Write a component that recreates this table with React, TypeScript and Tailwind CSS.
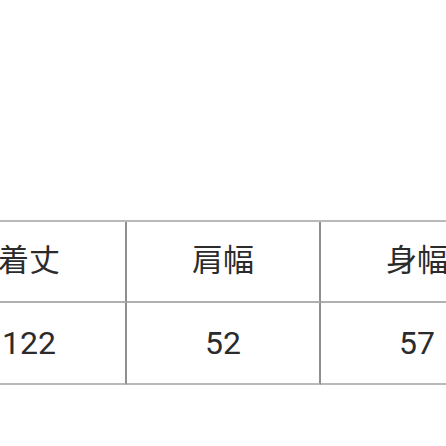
import React from 'react';

const headers = ['着丈', '肩幅', '身幅'];
const values = ['122', '52', '57'];

export default function App() {
  return (
    <div
      className="w-[446px] h-[446px] overflow-hidden bg-white text-[#2b2b2b]"
      style={{ fontFamily: 'Roboto, "Noto Sans CJK JP", sans-serif' }}
    >
      <div className="pt-[220px]">
        <div className="ml-[-67px] w-[582px] border-t-2 border-[#b9b9b9]">
          <div className="grid grid-cols-[194px_194px_194px]">
            {headers.map((h) => (
              <div
                key={h}
                className="h-[81px] flex items-center justify-center border-r-2 border-r-[#8f8f8f] border-b-2 border-b-[#b0b0b0] text-[31px] leading-none pb-[3px]"
              >
                {h}
              </div>
            ))}
            {values.map((v) => (
              <div
                key={v}
                className="h-[82px] flex items-center justify-center border-r-2 border-r-[#8f8f8f] border-b-2 border-b-[#b9b9b9] text-[32px] leading-none"
              >
                {v}
              </div>
            ))}
          </div>
        </div>
      </div>
    </div>
  );
}
